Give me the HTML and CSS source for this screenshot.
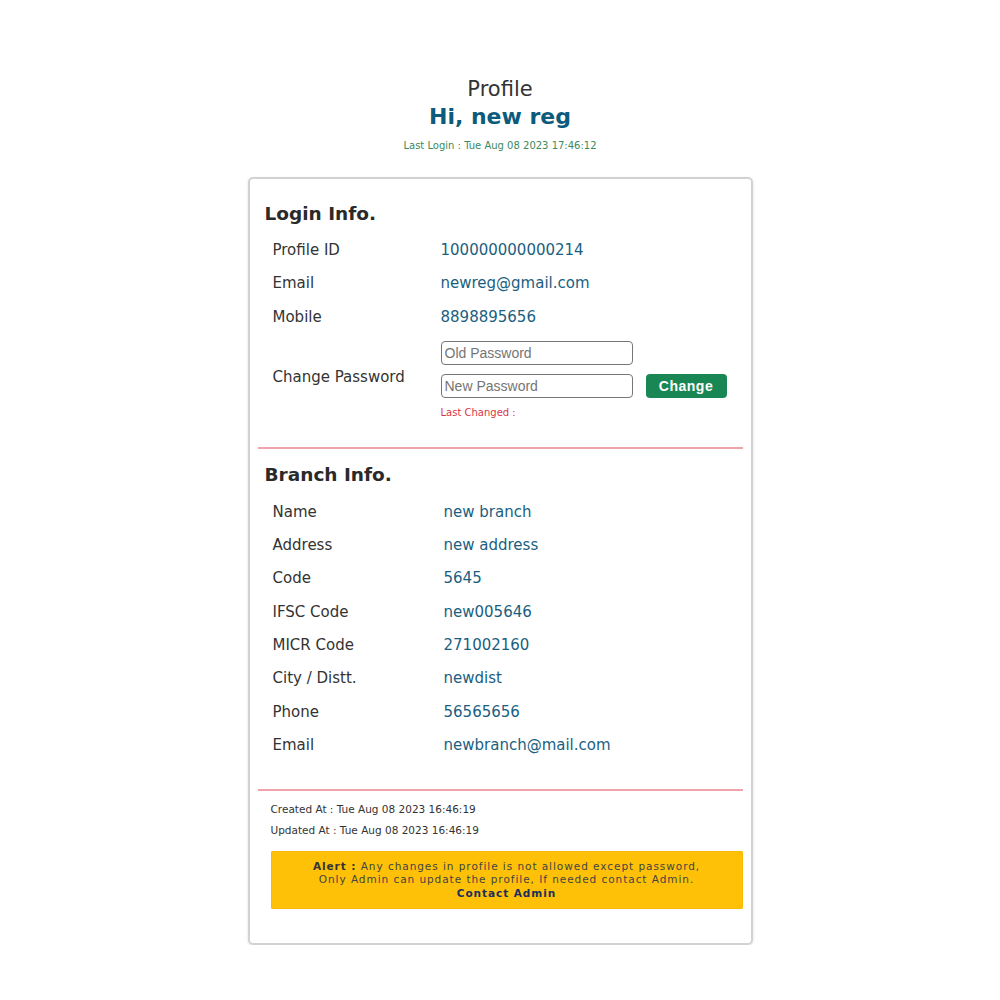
FILE: index.html
```html
<!DOCTYPE html>
<html>
<head>
<meta charset="utf-8">
<link rel="stylesheet" href="styles.css">
</head>
<body>
<div class="page">
  <header class="top">
    <div class="title">Profile</div>
    <div class="hi">Hi, new reg</div>
    <div class="last-login">Last Login : Tue Aug 08 2023 17:46:12</div>
  </header>
  <main class="card">
    <section class="sec login">
      <h2 class="sec-title">Login Info.</h2>
      <div class="rows rows-login">
        <div class="lbl">Profile ID</div><div class="val">100000000000214</div>
        <div class="lbl">Email</div><div class="val">newreg@gmail.com</div>
        <div class="lbl">Mobile</div><div class="val">8898895656</div>
      </div>
      <div class="pw">
        <div class="lbl pw-lbl">Change Password</div>
        <div class="pw-fields">
          <input class="inp" type="password" placeholder="Old Password">
          <div class="pw-line">
            <input class="inp" type="password" placeholder="New Password">
            <button class="btn">Change</button>
          </div>
          <div class="changed">Last Changed :</div>
        </div>
      </div>
    </section>
    <hr class="div">
    <section class="sec branch">
      <h2 class="sec-title">Branch Info.</h2>
      <div class="rows rows-branch">
        <div class="lbl">Name</div><div class="val">new branch</div>
        <div class="lbl">Address</div><div class="val">new address</div>
        <div class="lbl">Code</div><div class="val">5645</div>
        <div class="lbl">IFSC Code</div><div class="val">new005646</div>
        <div class="lbl">MICR Code</div><div class="val">271002160</div>
        <div class="lbl">City / Distt.</div><div class="val">newdist</div>
        <div class="lbl">Phone</div><div class="val">56565656</div>
        <div class="lbl">Email</div><div class="val">newbranch@mail.com</div>
      </div>
    </section>
    <hr class="div">
    <section class="foot">
      <div class="meta">Created At : Tue Aug 08 2023 16:46:19</div>
      <div class="meta">Updated At : Tue Aug 08 2023 16:46:19</div>
      <div class="alert">
        <b>Alert :</b> Any changes in profile is not allowed except password,<br>
        Only Admin can update the profile, If needed contact Admin.<br>
        <a class="contact">Contact Admin</a>
      </div>
    </section>
  </main>
</div>
</body>
</html>
```
FILE: styles.css
```css
* { box-sizing: border-box; }
body {
  margin: 0;
  background: #fff;
  font-family: "DejaVu Sans", "Open Sans", sans-serif;
  color: #333;
}
.page {
  width: 505px;
  margin: 0 auto;
  padding-top: 76px;
}
.top { text-align: center; }
.title { font-size: 21px; line-height: 26px; color: #333; }
.hi { font-size: 22px; font-weight: bold; color: #0d5b7c; line-height: 30px; }
.last-login { font-size: 10px; color: #3c8a5e; line-height: 14px; margin-top: 7px; }
.card {
  margin-top: 24px;
  border: 2px solid #d2d2d2;
  border-radius: 5px;
  box-shadow: 0 1px 3px rgba(0,0,0,0.12);
  padding: 10px 8px 34px 8px;
}
.sec-title {
  margin: 0;
  font-size: 18.5px;
  font-weight: bold;
  color: #2a2a2a;
  line-height: 28px;
  padding-left: 7px;
}
.login .sec-title { margin-top: 11px; }
.branch .sec-title { margin-top: 12px; }
.rows {
  display: grid;
  margin-left: 15px;
}
.rows-login { grid-template-columns: 168px 1fr; margin-top: 6px; }
.rows-branch { grid-template-columns: 171px 1fr; margin-top: 7px; }
.lbl, .val { font-size: 15px; line-height: 33.3px; }
.lbl { color: #333; }
.val { color: #1a5f80; }
.pw {
  display: flex;
  align-items: center;
  margin-left: 15px;
  padding-top: 7px;
}
.pw-lbl { width: 168px; line-height: 20px; margin-top: -7px; }
.pw-fields { display: flex; flex-direction: column; }
.pw-line { display: flex; align-items: center; gap: 13px; margin-top: 9px; }
.inp {
  width: 192px;
  height: 24px;
  border: 1px solid #767676;
  border-radius: 4px;
  font-family: "Liberation Sans", Arial, sans-serif;
  font-size: 14px;
  padding: 0 3px;
  margin: 0;
}
.inp::placeholder { color: #757575; }
.btn {
  background: #198754;
  color: #fff;
  border: none;
  border-radius: 4px;
  width: 81px;
  height: 24px;
  font-family: "Liberation Sans", Arial, sans-serif;
  font-weight: bold;
  font-size: 14px;
  letter-spacing: 0.5px;
  padding: 0;
}
.changed { color: #dc3545; font-size: 10px; line-height: 14px; margin-top: 8px; }
.div {
  border: none;
  border-top: 2px solid #f0a3aa;
  margin: 27px 0 0 0;
}
.foot { padding-left: 13px; padding-top: 8px; }
.meta { font-size: 10.5px; line-height: 21px; color: #333; }
.alert {
  margin-top: 10px;
  background: #ffc107;
  border: 1px solid #f5bb05;
  text-align: center;
  font-size: 10.5px;
  line-height: 13.5px;
  letter-spacing: 0.95px;
  color: #444;
  padding: 7.5px 4px;
  border-radius: 1px;
}
.alert b { color: #333; }
.contact { color: #1c2f5e; font-weight: bold; }
```
